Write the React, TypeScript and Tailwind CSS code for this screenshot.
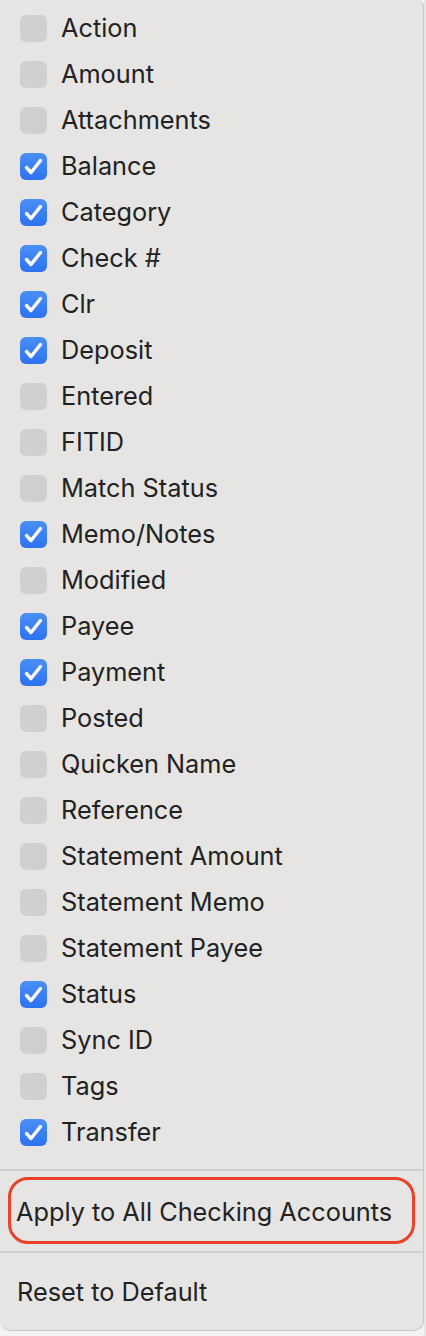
import React from 'react';

const columns: { label: string; checked: boolean }[] = [
  { label: 'Action', checked: false },
  { label: 'Amount', checked: false },
  { label: 'Attachments', checked: false },
  { label: 'Balance', checked: true },
  { label: 'Category', checked: true },
  { label: 'Check #', checked: true },
  { label: 'Clr', checked: true },
  { label: 'Deposit', checked: true },
  { label: 'Entered', checked: false },
  { label: 'FITID', checked: false },
  { label: 'Match Status', checked: false },
  { label: 'Memo/Notes', checked: true },
  { label: 'Modified', checked: false },
  { label: 'Payee', checked: true },
  { label: 'Payment', checked: true },
  { label: 'Posted', checked: false },
  { label: 'Quicken Name', checked: false },
  { label: 'Reference', checked: false },
  { label: 'Statement Amount', checked: false },
  { label: 'Statement Memo', checked: false },
  { label: 'Statement Payee', checked: false },
  { label: 'Status', checked: true },
  { label: 'Sync ID', checked: false },
  { label: 'Tags', checked: false },
  { label: 'Transfer', checked: true },
];

const Box = ({ checked }: { checked: boolean }) =>
  checked ? (
    <div className="w-[27px] h-[27px] rounded-[6px] bg-gradient-to-b from-[#4a8ff7] to-[#2d72f0] flex items-center justify-center">
      <svg width="27" height="27" viewBox="0 0 27 27" fill="none">
        <path d="M6.5 14.5 L11 19.5 L20.5 7.5" stroke="white" strokeWidth="3.4" strokeLinecap="round" strokeLinejoin="round" />
      </svg>
    </div>
  ) : (
    <div className="w-[27px] h-[27px] rounded-[6px] bg-[#d1d0ce]" />
  );

export default function App() {
  return (
    <div className="w-[426px] h-[1336px] bg-[#f4f4f4] flex" style={{ fontFamily: 'Inter, "Noto Sans", sans-serif' }}>
      <div className="w-[424px] h-[1331px] bg-[#e6e5e3] rounded-b-[10px] rounded-tr-[6px] border-r border-b border-[#c9c8c6] flex flex-col text-[#222222] text-[25.3px]">
        <div className="pt-[5px]">
          {columns.map((c) => (
            <div key={c.label} className="h-[46px] flex items-center pl-[20px] gap-[14px]">
              <Box checked={c.checked} />
              <span>{c.label}</span>
            </div>
          ))}
        </div>
        <div className="h-[14px]" />
        <div className="h-[2px] bg-[#d0cfcd]" />
        <div className="pt-[6px] pb-[7px] px-[8px]">
          <div className="h-[67px] rounded-[20px] border-[3px] border-[#e8432a] flex items-center pl-[5px] pt-[4px]">
            Apply to All Checking Accounts
          </div>
        </div>
        <div className="h-[2px] bg-[#d0cfcd]" />
        <div className="h-[79px] flex items-center pl-[17px] pt-[2px]">Reset to Default</div>
      </div>
      <div className="w-[2px] h-full bg-[#e6e5e3]" />
    </div>
  );
}
